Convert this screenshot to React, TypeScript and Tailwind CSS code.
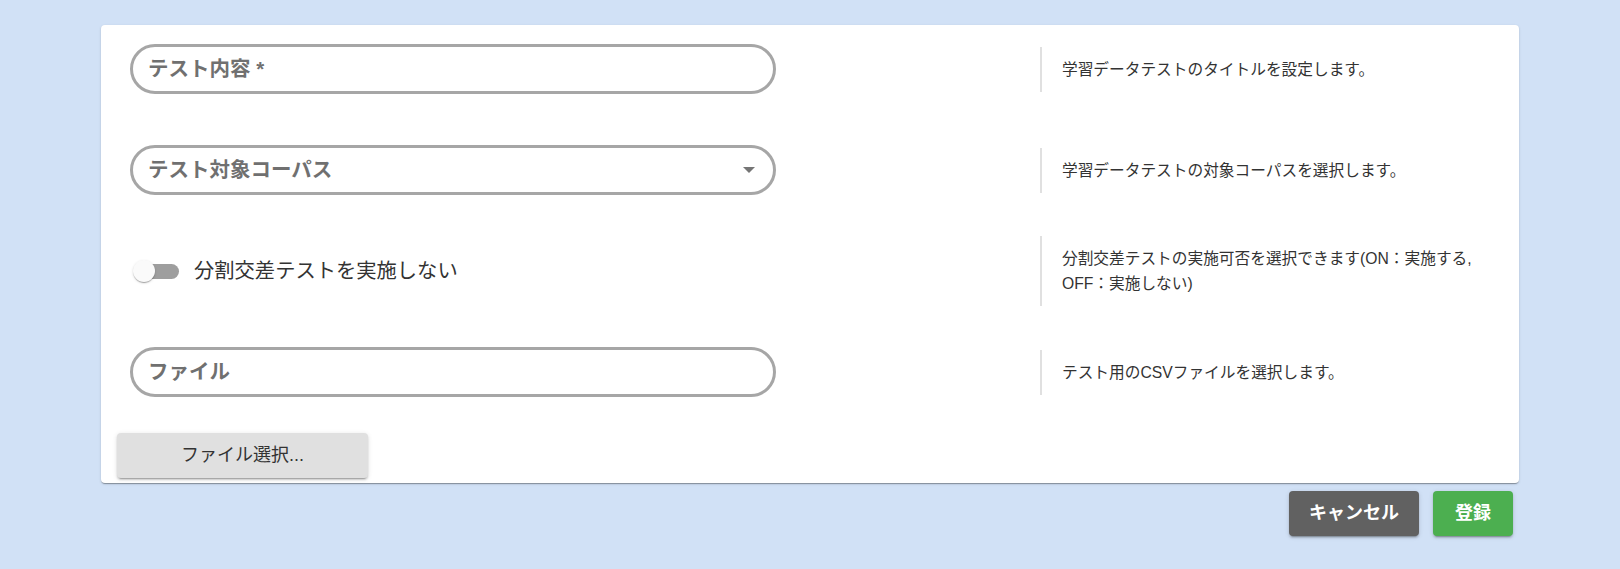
import React, { useState } from "react";

const paperShadow =
  "shadow-[0_2px_1px_-1px_rgba(0,0,0,0.2),0_1px_1px_0_rgba(0,0,0,0.14),0_1px_3px_0_rgba(0,0,0,0.12)]";

const Help: React.FC<{ children: React.ReactNode }> = ({ children }) => (
  <div className="border-l-2 border-[#e0e0e0] py-[10px] pl-[20px] text-[15.7px] leading-[25px] text-[#333]">
    {children}
  </div>
);

const Pill: React.FC<{ label: string; select?: boolean }> = ({ label, select }) => (
  <div className="ml-[13px] flex h-[50px] w-[646px] items-center justify-between rounded-full border-[3px] border-[#a6a6a6] bg-white pl-[15px] pr-[18px]">
    <span className="text-[20.5px] font-bold text-[#707070]">{label}</span>
    {select && (
      <svg width="12" height="6" viewBox="0 0 12 6">
        <path d="M0 0 L12 0 L6 6 Z" fill="#757575" />
      </svg>
    )}
  </div>
);

const App: React.FC = () => {
  const [split, setSplit] = useState(false);

  return (
    <div
      className="min-h-screen w-full bg-[#d1e1f6] pt-[25px]"
      style={{ fontFamily: '"Liberation Sans", "Noto Sans CJK JP", sans-serif' }}
    >
      <div className="mx-auto w-[1418px]">
        {/* form card */}
        <div className={`rounded-[4px] bg-white px-4 pt-[19px] pb-[5px] ${paperShadow}`}>
          <div className="flex flex-col gap-[51px]">
            <div className="flex h-[50px] items-center">
              <div className="w-[923px]">
                <Pill label="テスト内容 *" />
              </div>
              <Help>学習データテストのタイトルを設定します。</Help>
            </div>

            <div className="flex h-[50px] items-center">
              <div className="w-[923px]">
                <Pill label="テスト対象コーパス" select />
              </div>
              <Help>学習データテストの対象コーパスを選択します。</Help>
            </div>

            <div className="flex h-[50px] items-center">
              <div className="flex w-[923px] items-center pl-[16px]">
                <button
                  type="button"
                  onClick={() => setSplit(!split)}
                  className="relative h-[22px] w-[46px] shrink-0"
                >
                  <span className="absolute left-[12px] top-[4px] h-[15px] w-[34px] rounded-full bg-[#9e9e9e]" />
                  <span
                    className={`absolute top-0 h-[22px] w-[22px] rounded-full bg-[#fafafa] shadow-[0_2px_1px_-1px_rgba(0,0,0,0.2),0_1px_1px_0_rgba(0,0,0,0.14),0_1px_3px_0_rgba(0,0,0,0.12)] ${
                      split ? "left-[24px]" : "left-0"
                    }`}
                  />
                </button>
                <span className="ml-[15px] text-[20.3px] text-[#333]">分割交差テストを実施しない</span>
              </div>
              <Help>
                分割交差テストの実施可否を選択できます(ON：実施する,
                <br />
                OFF：実施しない)
              </Help>
            </div>

            <div className="flex h-[50px] items-center">
              <div className="w-[923px]">
                <Pill label="ファイル" />
              </div>
              <Help>テスト用のCSVファイルを選択します。</Help>
            </div>
          </div>

          <button
            type="button"
            className="mt-[36px] h-[45px] w-[251px] rounded-[4px] bg-[#e0e0e0] text-[18px] text-[#333] shadow-[0_3px_1px_-2px_rgba(0,0,0,0.2),0_2px_2px_0_rgba(0,0,0,0.14),0_1px_5px_0_rgba(0,0,0,0.12)]"
          >
            ファイル選択...
          </button>
        </div>

        {/* actions */}
        <div className="mt-[8px] flex justify-end gap-[14px] pr-[6px]">
          <button
            type="button"
            className="h-[45px] w-[130px] rounded-[4px] bg-[#616161] text-[18px] font-bold text-white shadow-[0_3px_1px_-2px_rgba(0,0,0,0.2),0_2px_2px_0_rgba(0,0,0,0.14),0_1px_5px_0_rgba(0,0,0,0.12)]"
          >
            キャンセル
          </button>
          <button
            type="button"
            className="h-[45px] w-[80px] rounded-[4px] bg-[#4caf50] text-[18px] font-bold text-white shadow-[0_3px_1px_-2px_rgba(0,0,0,0.2),0_2px_2px_0_rgba(0,0,0,0.14),0_1px_5px_0_rgba(0,0,0,0.12)]"
          >
            登録
          </button>
        </div>
      </div>
    </div>
  );
};

export default App;
